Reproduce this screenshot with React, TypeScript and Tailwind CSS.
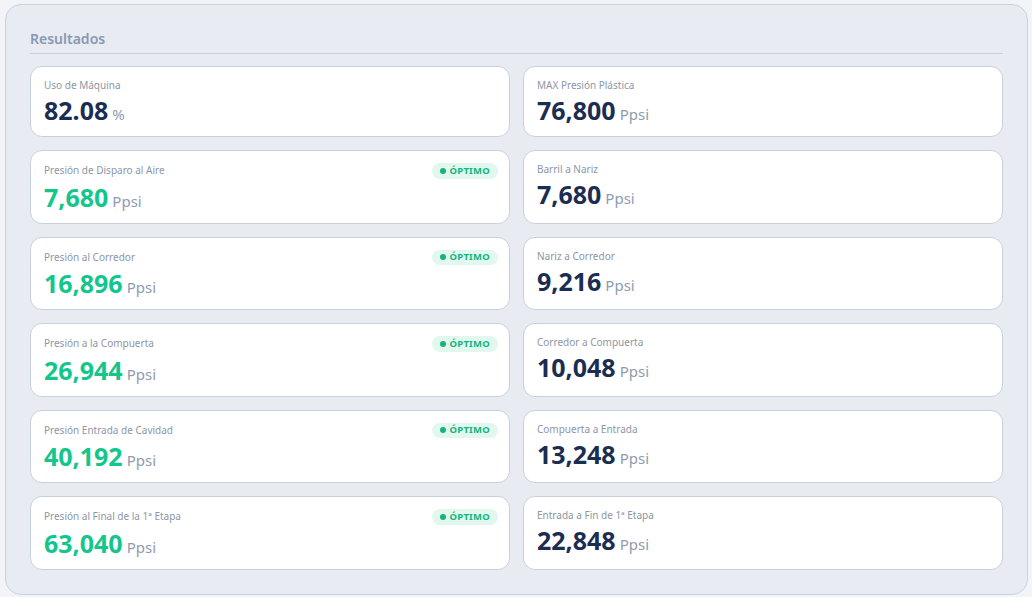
import { FC } from 'react';

type Item = {
  label: string;
  value: string;
  unit: string;
  optimo?: boolean;
};

const left: Item[] = [
  { label: 'Uso de Máquina', value: '82.08', unit: '%' },
  { label: 'Presión de Disparo al Aire', value: '7,680', unit: 'Ppsi', optimo: true },
  { label: 'Presión al Corredor', value: '16,896', unit: 'Ppsi', optimo: true },
  { label: 'Presión a la Compuerta', value: '26,944', unit: 'Ppsi', optimo: true },
  { label: 'Presión Entrada de Cavidad', value: '40,192', unit: 'Ppsi', optimo: true },
  { label: 'Presión al Final de la 1ª Etapa', value: '63,040', unit: 'Ppsi', optimo: true },
];

const right: Item[] = [
  { label: 'MAX Presión Plástica', value: '76,800', unit: 'Ppsi' },
  { label: 'Barril a Nariz', value: '7,680', unit: 'Ppsi' },
  { label: 'Nariz a Corredor', value: '9,216', unit: 'Ppsi' },
  { label: 'Corredor a Compuerta', value: '10,048', unit: 'Ppsi' },
  { label: 'Compuerta a Entrada', value: '13,248', unit: 'Ppsi' },
  { label: 'Entrada a Fin de 1ª Etapa', value: '22,848', unit: 'Ppsi' },
];

const Card: FC<{ item: Item }> = ({ item }) => (
  <div className="rounded-xl border border-[#c9d0dd] bg-white pl-[13px] pr-[11px] pt-3 pb-[7px]">
    <div className="flex items-center justify-between">
      <span className="text-[10px] leading-[13px] text-[#8e96a6]">{item.label}</span>
      {item.optimo && (
        <span className="flex h-[15.5px] items-center gap-1 rounded-full bg-[#e2f8ee] px-2 text-[9.5px] font-bold tracking-wide text-[#14b47f]">
          <span className="h-[6px] w-[6px] rounded-full bg-[#14b47f]" />
          ÓPTIMO
        </span>
      )}
    </div>
    <div className="mt-[3px] flex items-baseline leading-[30px]">
      <span
        className={
          'text-[25px] font-bold ' + (item.optimo ? 'text-[#12c68c]' : 'text-[#1c2d52]')
        }
      >
        {item.value}
      </span>
      <span className="ml-1 text-[15px] text-[#8f9bb0]">{item.unit}</span>
    </div>
  </div>
);

const App: FC = () => {
  const rows = left.map((l, i) => [l, right[i]]);
  return (
    <div
      className="min-h-screen bg-[#f2f4f7] pl-[5px] pr-[4px] pt-[4px] pb-[4px]"
      style={{ fontFamily: '"Noto Sans", "Liberation Sans", sans-serif' }}
    >
      <section className="rounded-2xl border border-[#c7d2e7] bg-[#e8ecf2] pl-6 pr-6 pt-6 pb-6">
        <h2 className="border-b border-[#c5d0e4] pb-[4px] text-sm font-semibold text-[#8798b4]">
          Resultados
        </h2>
        <div className="mt-3 grid grid-cols-2 gap-[13px]">
          {rows.flat().map((item) => (
            <Card key={item.label} item={item} />
          ))}
        </div>
      </section>
    </div>
  );
};

export default App;
